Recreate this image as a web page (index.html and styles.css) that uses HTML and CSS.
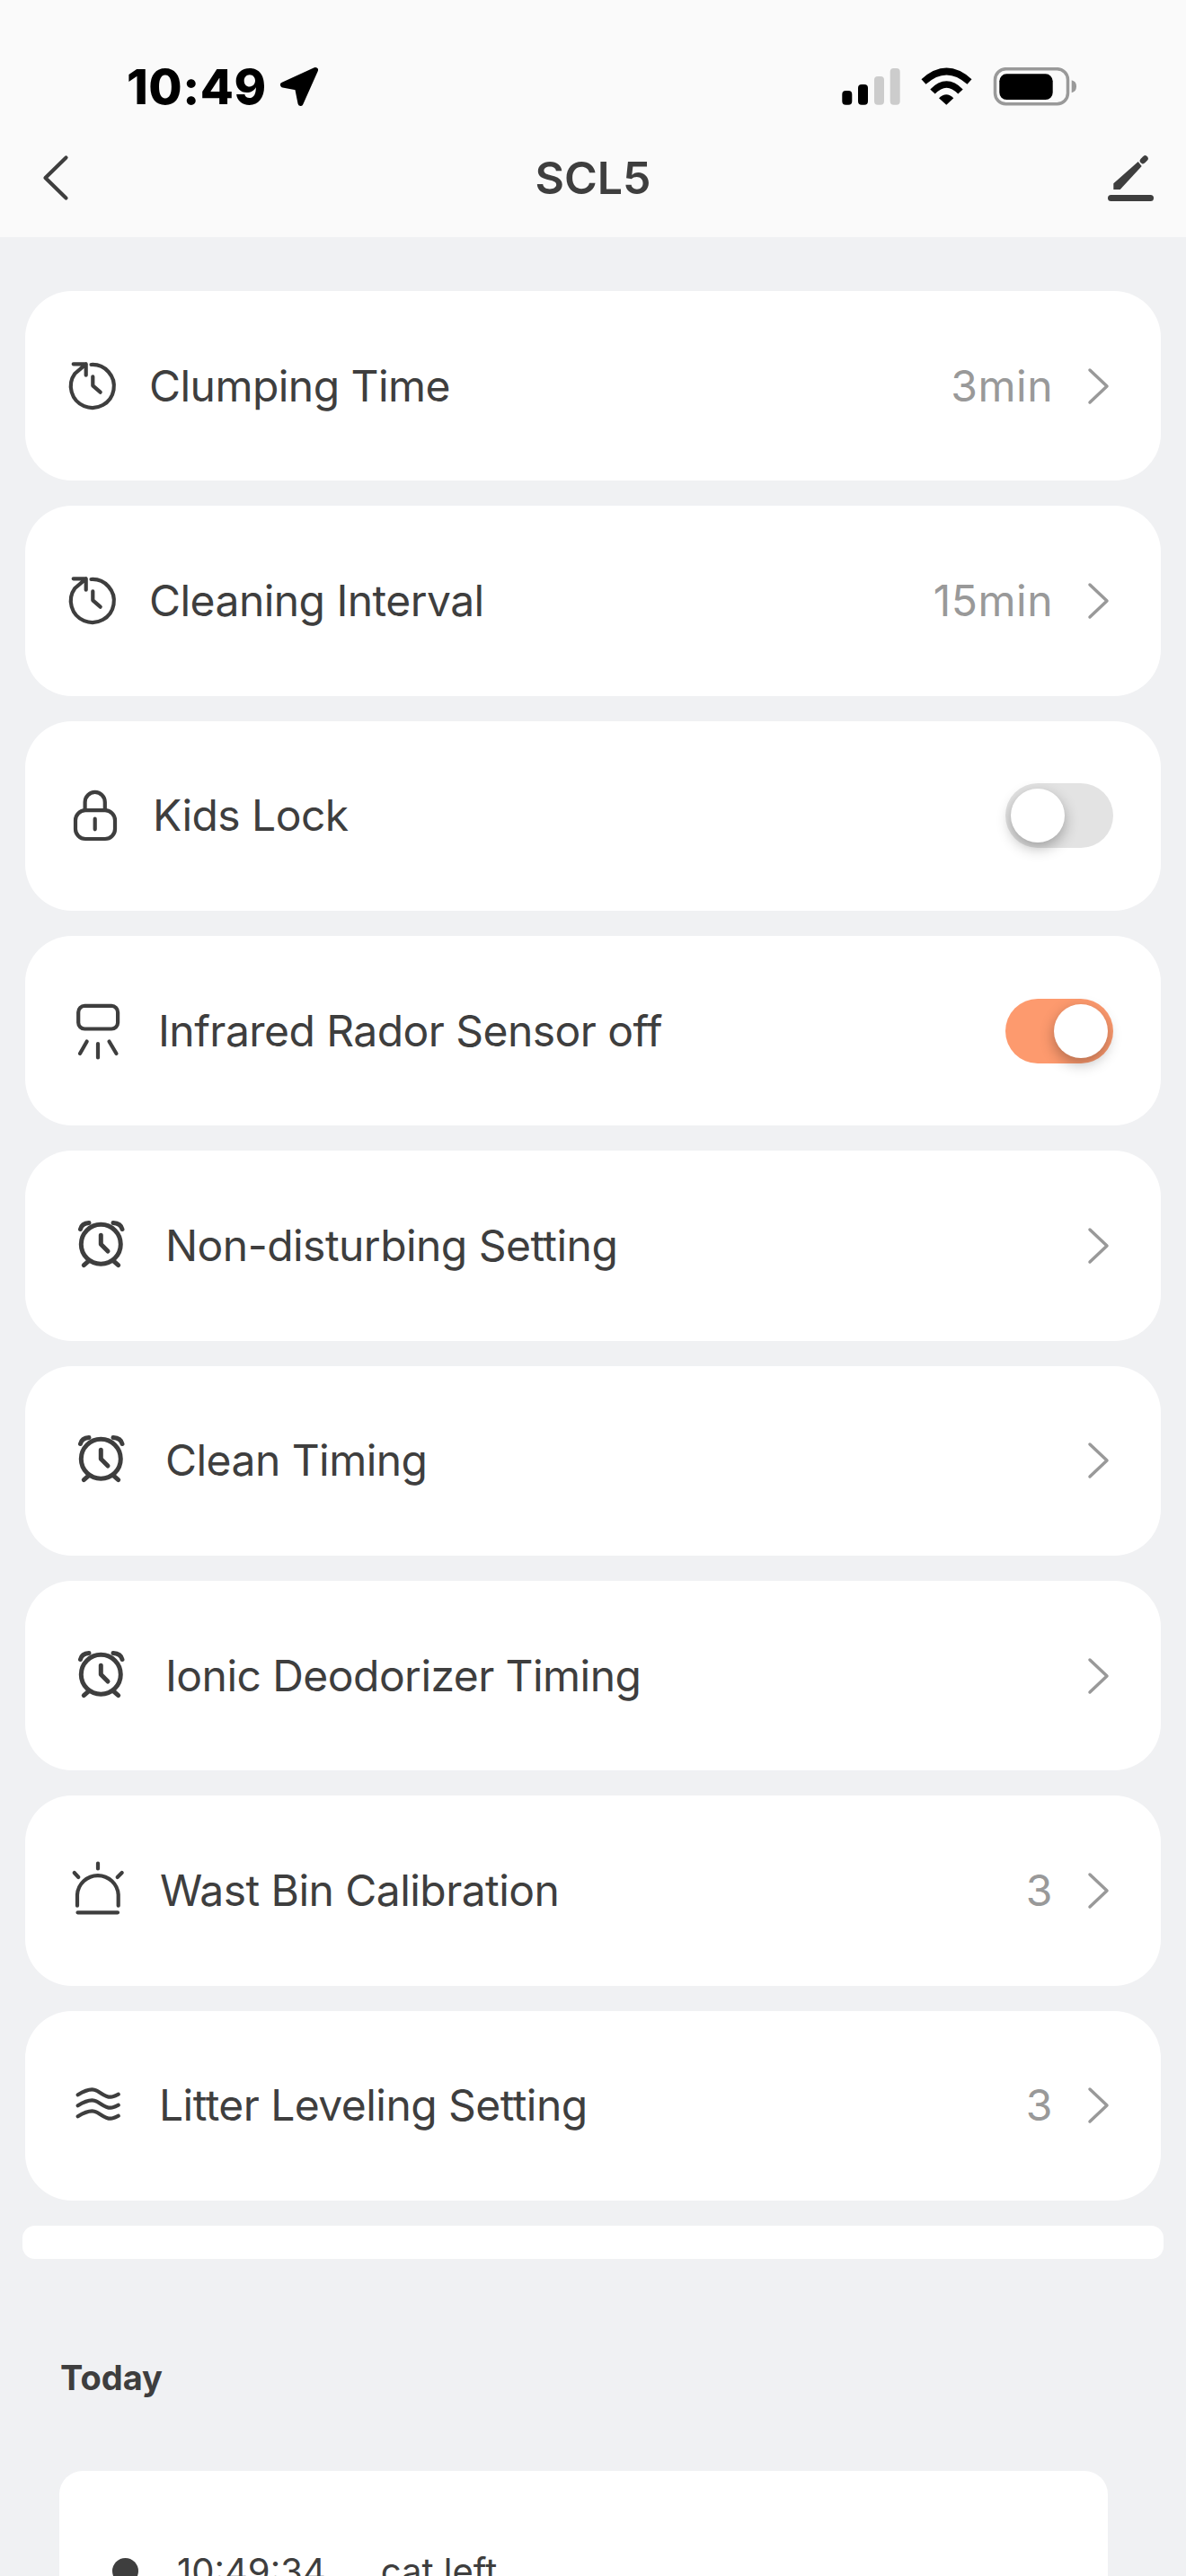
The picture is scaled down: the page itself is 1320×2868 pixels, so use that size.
FILE: index.html
```html
<!DOCTYPE html>
<html lang="en">
<head>
	<meta charset="UTF-8">
	<title>SCL5</title>
	<link rel="stylesheet" href="styles.css">
</head>
<body>
	<svg class="sprite" xmlns="http://www.w3.org/2000/svg">
		<symbol id="i-clock" viewBox="0 0 60 60">
			<path d="M28.5 6A24 24 0 1 1 10.3 16L22.7 5.3M8.7 5.3H22.7V17.7M30.3 19.3V29.3L38.7 36.7"/>
		</symbol>
		<symbol id="i-alarm" viewBox="0 0 53 60">
			<circle cx="26.3" cy="28.3" r="22"/>
			<path d="M26.3 18.3V28.3L34 36M3.5 11.5Q5 5 13 4.5M50 11.5Q48.5 5 40 4.5M7.3 51.6L13 46.6M45.7 51.6L40 46.6"/>
		</symbol>
	</svg>

	<div class="page">
		<div class="header">
			<div class="status">
				<span class="clock">10:49</span>
				<svg class="arrow" width="48" height="50" viewBox="0 0 48 50"><polygon points="41,6 5,22.5 21,25.5 24.5,43"/></svg>
				<svg class="signal" width="262" height="44" viewBox="0 0 262 44">
					<rect x="0.3" y="26" width="11" height="15.7" rx="4"/>
					<rect x="18" y="19" width="11" height="22.7" rx="4"/>
					<rect class="dim" x="36" y="10" width="11" height="31.7" rx="4"/>
					<rect class="dim" x="53.7" y="1" width="11" height="40.7" rx="4"/>
					<path class="wave" d="M91 16Q116.5 -7 142 16"/>
					<path class="wave" d="M101 27Q116.5 11 132 27"/>
					<path d="M108 34.3Q116.3 26 124.3 34.3L116.3 41.7Z"/>
					<rect class="batt" x="170.5" y="1.7" width="81" height="39" rx="12"/>
					<rect x="175.3" y="7.3" width="59.4" height="28.7" rx="8"/>
					<path class="cap" d="M255.7 14.3Q261 15.5 261 21.3T255.7 28.3Z"/>
				</svg>
			</div>
			<div class="nav">
				<svg class="ico" width="56" height="56" viewBox="0 0 56 56"><path d="M39.5 5.5L16.5 28L39.5 50.5"/></svg>
				<div class="title">SCL5</div>
				<svg class="edit" width="56" height="56" viewBox="0 0 56 56">
					<polygon points="9.3,41 9.3,34.3 36.7,10 40.7,15 16.7,41"/>
					<path class="tip" d="M42 9L44.5 6.5"/>
					<rect x="3" y="47" width="51" height="7" rx="3.5"/>
				</svg>
			</div>
		</div>

		<div class="list">
			<div class="row">
				<svg class="ico i1" width="60" height="60"><use href="#i-clock"/></svg>
				<span class="name n1">Clumping Time</span>
				<span class="val">3min</span>
				<svg class="more" width="26" height="42" viewBox="0 0 26 42"><path d="M3 3L22 21L3 39"/></svg>
			</div>
			<div class="row">
				<svg class="ico i1" width="60" height="60"><use href="#i-clock"/></svg>
				<span class="name n1">Cleaning Interval</span>
				<span class="val">15min</span>
				<svg class="more" width="26" height="42" viewBox="0 0 26 42"><path d="M3 3L22 21L3 39"/></svg>
			</div>
			<div class="row">
				<svg class="ico i2" width="52" height="60" viewBox="0 0 52 60">
					<rect x="4" y="24.2" width="44" height="31.8" rx="11"/>
					<path d="M14.6 24V15A11.1 11.1 0 0 1 36.8 15V24M25.7 33.7V45.3"/>
				</svg>
				<span class="name n2">Kids Lock</span>
				<span class="toggle"><span class="knob"></span></span>
			</div>
			<div class="row">
				<svg class="ico i3" width="52" height="66" viewBox="0 0 52 66">
					<rect x="4.2" y="4.9" width="43.9" height="25.6" rx="7"/>
					<path d="M13.7 44.5L6 58M26 47V62.5M38.5 44.5L46.5 58"/>
				</svg>
				<span class="name n3">Infrared Rador Sensor off</span>
				<span class="toggle on"><span class="knob"></span></span>
			</div>
			<div class="row">
				<svg class="ico i4" width="53" height="60"><use href="#i-alarm"/></svg>
				<span class="name n4">Non-disturbing Setting</span>
				<svg class="more" width="26" height="42" viewBox="0 0 26 42"><path d="M3 3L22 21L3 39"/></svg>
			</div>
			<div class="row">
				<svg class="ico i4" width="53" height="60"><use href="#i-alarm"/></svg>
				<span class="name n4">Clean Timing</span>
				<svg class="more" width="26" height="42" viewBox="0 0 26 42"><path d="M3 3L22 21L3 39"/></svg>
			</div>
			<div class="row">
				<svg class="ico i4" width="53" height="60"><use href="#i-alarm"/></svg>
				<span class="name n4">Ionic Deodorizer Timing</span>
				<svg class="more" width="26" height="42" viewBox="0 0 26 42"><path d="M3 3L22 21L3 39"/></svg>
			</div>
			<div class="row">
				<svg class="ico i5" width="60" height="67" viewBox="0 0 60 67">
					<path d="M7 50.7V38.5A22.9 22.9 0 0 1 52.7 38.5V50.7M7.5 58.3H52M30 3.5V9.5M3.7 14L8.3 19M56.7 14L51.7 19"/>
				</svg>
				<span class="name n5">Wast Bin Calibration</span>
				<span class="val">3</span>
				<svg class="more" width="26" height="42" viewBox="0 0 26 42"><path d="M3 3L22 21L3 39"/></svg>
			</div>
			<div class="row">
				<svg class="ico i6" width="50" height="50" viewBox="0 0 50 50">
					<path d="M2.7 13.3C8 10 15 6.5 21 7.7C27 9 32 16 39.3 15.7C42 15.6 45 14 47.7 12.7"/>
					<path d="M2.7 25.3C8 22 15 18.5 21 19.7C27 21 32 28 39.3 27.7C42 27.6 45 26 47.7 24.7"/>
					<path d="M2.7 37.3C8 34 15 30.5 21 31.7C27 33 32 40 39.3 39.7C42 39.6 45 38 47.7 36.7"/>
				</svg>
				<span class="name n6">Litter Leveling Setting</span>
				<span class="val">3</span>
				<svg class="more" width="26" height="42" viewBox="0 0 26 42"><path d="M3 3L22 21L3 39"/></svg>
			</div>
			<div class="slim"></div>
		</div>

		<div class="today">Today</div>
		<div class="log">
			<div class="log_item">
				<span class="dot"></span>
				<span class="log_time">10:49:34</span>
				<span class="log_txt">cat left</span>
			</div>
		</div>
	</div>
</body>
</html>
```

FILE: styles.css
```css
html,body{margin: 0; padding: 0; background: #f0f1f3;}
body{font-family: Inter,"Liberation Sans",sans-serif; color: #3e3e3e;}
svg{display: block; flex: none;}
.sprite{display: none;}
.page{height: 2868px; overflow: hidden;}

.header{height: 264px; background: #fafafa;}
.status{display: flex; align-items: center; height: 44px; padding: 75px 0 0 141px; color: #000;}
.clock{font-size: 54px; font-weight: 800; line-height: 44px; letter-spacing: .5px;}
.arrow{margin-left: 13px; stroke: #000; stroke-width: 6; stroke-linejoin: round;}
.signal{margin-left: auto; margin-right: 121px;}
.signal .dim{fill: #ccc;}
.signal .wave{fill: none; stroke: #000; stroke-width: 7.5;}
.signal .batt{fill: none; stroke: #999; stroke-width: 3.5;}
.signal .cap{fill: #999;}
.nav{display: flex; align-items: center; justify-content: space-between; height: 56px; margin-top: 51px; padding: 0 34px;}
.title{font-size: 50px; font-weight: 600; line-height: 56px;}
.edit{fill: #3e3e3e;}
.edit .tip{fill: none; stroke: #3e3e3e; stroke-width: 6.5; stroke-linecap: round;}

.ico{fill: none; stroke: #3e3e3e; stroke-width: 4.2; stroke-linecap: round; stroke-linejoin: round;}

.list{display: flex; flex-direction: column; gap: 28px; padding: 60px 28px 0;}
.row{display: flex; align-items: center; height: 211.33px; padding: 0 56px 0 45px; background: #fff; border-radius: 52px; box-sizing: border-box;}
.name{font-size: 48px; line-height: 60px; letter-spacing: -0.55px; white-space: nowrap;}
.val{margin-left: auto; font-size: 48px; line-height: 60px; letter-spacing: .5px; color: #999;}
.more{margin-left: 38px; fill: none; stroke: #999; stroke-width: 3.5; stroke-linecap: round; stroke-linejoin: round;}
.name + .more{margin-left: auto;}

.i2{margin-left: 7px;}
.i3{margin-left: 10px;}
.i4{margin-left: 13px; stroke-width: 5;}
.i5{margin-left: 6px;}
.i6{margin-left: 11px;}
.n1{margin-left: 33px;}
.n2{margin-left: 38px;}
.n3{margin-left: 41px;}
.n4{margin-left: 45px;}
.n5{margin-left: 39px;}
.n6{margin-left: 43px;}

.toggle{display: flex; align-items: center; width: 120px; height: 72px; margin: 0 -3px 0 auto; padding: 0 6px; background: #e3e3e3; border-radius: 36px; box-sizing: border-box;}
.knob{width: 60px; height: 60px; background: #fff; border-radius: 50%; box-shadow: 0 6px 16px rgba(0,0,0,.3);}
.toggle.on{justify-content: flex-end; background: #fd9a6e;}

.slim{height: 37px; margin: 0 -3px; background: #fff; border-radius: 14px;}

.today{margin: 109px 0 0 67px; font-size: 38px; font-weight: 700; line-height: 46px;}
.log{margin: 81px 87px 0 66px; height: 300px; background: #fff; border-radius: 26px;}
.log_item{display: flex; align-items: center; height: 48px; padding: 88px 0 0 59px;}
.dot{width: 29px; height: 29px; background: #3e3e3e; border-radius: 50%;}
.log_time{margin-left: 43px; font-size: 40px; line-height: 48px;}
.log_txt{margin-left: 61px; font-size: 40px; line-height: 48px;}
```
